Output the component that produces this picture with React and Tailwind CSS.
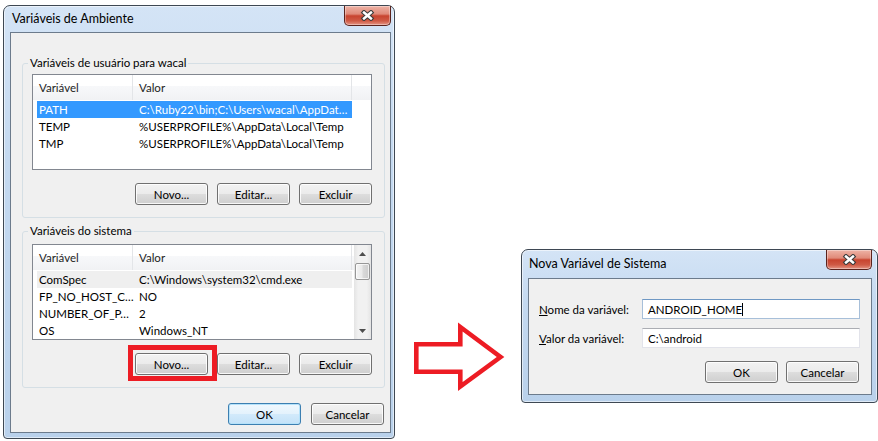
import React from "react";

function CloseBtn({ w = "w-[47px]" }) {
  return (
    <div
      className={`${w} h-[20px] rounded-b-[5px] border border-t-0 border-[#5b231d] bg-[linear-gradient(#eeb3a6_0%,#e08a79_42%,#c8442f_52%,#cf5a45_78%,#e49585_100%)] shadow-[inset_0_0_0_1px_rgba(255,255,255,0.35)] flex items-center justify-center`}
    >
      <svg width="15" height="11" viewBox="0 0 15 11">
        <path d="M4 2.5 L11 8.5 M11 2.5 L4 8.5" stroke="#3b3b3b" strokeWidth="4.6" strokeLinecap="square" />
        <path d="M4 2.5 L11 8.5 M11 2.5 L4 8.5" stroke="#ffffff" strokeWidth="2.4" strokeLinecap="square" />
      </svg>
    </div>
  );
}

function Btn({ children, focused }) {
  return (
    <div
      className={`w-[73px] h-[22px] flex items-center justify-center rounded-[3px] border text-[11.5px] leading-[15px] text-black ${
        focused
          ? "border-[#3c7fb1] bg-[linear-gradient(#f0f8fe,#e3f2fc_50%,#d2eafb_50%,#c3e2f8)] shadow-[inset_0_0_0_1px_#b5e2fa]"
          : "border-[#707070] bg-[linear-gradient(#f2f2f2,#ebebeb_50%,#dddddd_50%,#cfcfcf)] shadow-[inset_0_0_0_1px_rgba(255,255,255,0.85)]"
      }`}
    >
      {children}
    </div>
  );
}

function Header({ full }) {
  return (
    <div className="h-[25px] flex bg-[linear-gradient(#ffffff_0%,#ffffff_45%,#f7f8fa_45%,#f1f2f4_100%)] text-[11.5px] leading-[15px] text-[#1e1e1e]">
      <div className="w-[100px] shrink-0 pl-[6px] flex items-center border-r border-[#e3e5e8]">Variável</div>
      <div className="w-[219px] shrink-0 pl-[6px] flex items-center border-r border-[#e3e5e8]">Valor</div>
      {full ? <div className="flex-1" /> : null}
    </div>
  );
}

function Row({ name, value, sel, soft }) {
  return (
    <div className="h-[17px] flex">
      <div
        className={`ml-[4px] w-[315px] shrink-0 flex items-center text-[11.5px] leading-[15px] overflow-hidden ${
          sel ? "bg-[#3399ff] text-white" : soft ? "bg-[#efefef] text-black" : "text-black"
        }`}
      >
        <div className="w-[100px] shrink-0 pl-[2px] whitespace-nowrap overflow-hidden">{name}</div>
        <div className="pl-[2px] whitespace-nowrap">{value}</div>
      </div>
    </div>
  );
}

function Scrollbar() {
  return (
    <div className="w-[17px] h-full shrink-0 flex flex-col bg-[linear-gradient(90deg,#e4e4e4,#f1f1f1_25%,#f1f1f1_75%,#e4e4e4)]">
      <div className="h-[18px] flex items-center justify-center">
        <svg width="7" height="4" viewBox="0 0 7 4">
          <path d="M0 4 L3.5 0 L7 4 Z" fill="#4d4d4d" />
        </svg>
      </div>
      <div className="mx-[1px] h-[17px] rounded-[2px] border border-[#979797] bg-[linear-gradient(90deg,#f4f4f4,#eaeaea_45%,#d9d9d9_55%,#cdcdcd)] shadow-[inset_0_0_0_1px_rgba(255,255,255,0.7)]" />
      <div className="flex-1" />
      <div className="h-[17px] flex items-center justify-center">
        <svg width="7" height="4" viewBox="0 0 7 4">
          <path d="M0 0 L3.5 4 L7 0 Z" fill="#4d4d4d" />
        </svg>
      </div>
    </div>
  );
}

export default function App() {
  const sys = [
    ["ComSpec", "C:\\Windows\\system32\\cmd.exe", false, true],
    ["FP_NO_HOST_C…", "NO"],
    ["NUMBER_OF_P…", "2"],
    ["OS", "Windows_NT"],
  ];
  return (
    <div className="w-[878px] h-[441px] bg-white overflow-hidden flex items-start font-['Lato',sans-serif]">
      {/* Left window */}
      <div className="ml-[3px] mt-[5px] w-[392px] h-[434px] shrink-0 flex flex-col rounded-t-[7px] rounded-b-[4px] border border-[#3e4853] bg-[linear-gradient(180deg,#d4e4f6_0%,#c4d9f0_35%,#b9d1eb_100%)] shadow-[inset_0_0_0_1px_rgba(255,255,255,0.55)] pl-[6px] pr-[3px] pb-[5px]">
        <div className="h-[26px] flex items-start justify-between">
          <div className="pt-[5px] pl-[2px] text-[12.5px] leading-[16px] text-black">Variáveis de Ambiente</div>
          <CloseBtn />
        </div>
        <div className="flex-1 border border-[#6c7b8c] bg-[#f0f0f0] flex flex-col">
          {/* group 1 */}
          <fieldset className="ml-[11px] mt-[22px] w-[362px] border border-[#d5dfe5] rounded-[3px]">
            <legend className="ml-[5px] px-[2px] text-[11.5px] leading-[16px] text-black">Variáveis de usuário para wacal</legend>
            <div className="pl-[9px] pr-[12px] pt-[3px] pb-[12px] flex flex-col">
              <div className="w-[340px] h-[96px] border border-[#828790] bg-white flex flex-col overflow-hidden">
                <Header full />
                <div className="mt-[1px]">
                  <Row name="PATH" value={"C:\\Ruby22\\bin;C:\\Users\\wacal\\AppDat…"} sel />
                  <Row name="TEMP" value={"%USERPROFILE%\\AppData\\Local\\Temp"} />
                  <Row name="TMP" value={"%USERPROFILE%\\AppData\\Local\\Temp"} />
                </div>
              </div>
              <div className="mt-[13px] flex justify-end gap-[9px]">
                <Btn>Novo...</Btn>
                <Btn>Editar...</Btn>
                <Btn>Excluir</Btn>
              </div>
            </div>
          </fieldset>
          {/* group 2 */}
          <fieldset className="ml-[11px] mt-[5px] w-[362px] border border-[#d5dfe5] rounded-[3px]">
            <legend className="ml-[5px] px-[2px] text-[11.5px] leading-[16px] text-black">Variáveis do sistema</legend>
            <div className="pl-[9px] pr-[12px] pt-[5px] pb-[12px] flex flex-col">
              <div className="w-[340px] h-[96px] border border-[#828790] bg-white flex overflow-hidden">
                <div className="w-[321px] shrink-0 flex flex-col">
                  <Header />
                  <div className="mt-[1px]">
                    {sys.map((r) => (
                      <Row key={r[0]} name={r[0]} value={r[1]} soft={r[3]} />
                    ))}
                  </div>
                </div>
                <Scrollbar />
              </div>
              <div className="mt-[13px] flex justify-end gap-[9px]">
                <div className="relative">
                  <Btn>Novo...</Btn>
                  <div className="absolute -left-[7px] -top-[8px] w-[89px] h-[36px] border-[5px] border-[#ed1c24]" />
                </div>
                <Btn>Editar...</Btn>
                <Btn>Excluir</Btn>
              </div>
            </div>
          </fieldset>
          <div className="mt-[15px] pr-[6px] flex justify-end gap-[10px]">
            <Btn focused>OK</Btn>
            <Btn>Cancelar</Btn>
          </div>
        </div>
      </div>

      {/* Arrow */}
      <svg className="ml-[17px] mt-[322px] shrink-0" width="96" height="70" viewBox="0 0 96 70">
        <polygon
          points="4.3,22.3 48.3,22.3 48.3,5 88.5,35 48.3,64.5 48.3,49.7 4.3,49.7"
          fill="white"
          stroke="#ed1c24"
          strokeWidth="4.6"
          strokeLinejoin="miter"
        />
      </svg>

      {/* Right window */}
      <div className="ml-[13px] mt-[249px] w-[357px] h-[154px] shrink-0 flex flex-col rounded-t-[7px] rounded-b-[4px] border border-[#3e4853] bg-[linear-gradient(180deg,#d4e4f6_0%,#c4d9f0_35%,#b9d1eb_100%)] shadow-[inset_0_0_0_1px_rgba(255,255,255,0.55)] pl-[6px] pr-[5px] pb-[7px]">
        <div className="h-[28px] flex items-start justify-between">
          <div className="pt-[6px] pl-[1px] text-[12.5px] leading-[16px] text-black">Nova Variável de Sistema</div>
          <CloseBtn w="w-[46px]" />
        </div>
        <div className="flex-1 border border-[#6c7b8c] bg-[#f0f0f0] flex flex-col pl-[10px] pr-[10px] pt-[20px]">
          <div className="grid grid-cols-[103px_218px] gap-y-[9px] text-[11.5px] leading-[15px] text-black">
            <div className="h-[20px] flex items-center">
              <span><span className="underline">N</span>ome da variável:</span>
            </div>
            <div className="h-[20px] border border-[#a7bfd9] border-t-[#6f98c4] flex items-center pl-[5px] bg-white">
              <span>ANDROID_HOME</span>
              <span className="w-[1px] h-[13px] bg-black" />
            </div>
            <div className="h-[20px] flex items-center">
              <span><span className="underline">V</span>alor da variável:</span>
            </div>
            <div className="h-[20px] border border-[#e2e3ea] border-t-[#abadb3] flex items-center pl-[5px] bg-white">
              {"C:\\android"}
            </div>
          </div>
          <div className="mt-[13px] pr-[2px] flex justify-end gap-[8px]">
            <Btn>OK</Btn>
            <Btn>Cancelar</Btn>
          </div>
        </div>
      </div>
    </div>
  );
}
